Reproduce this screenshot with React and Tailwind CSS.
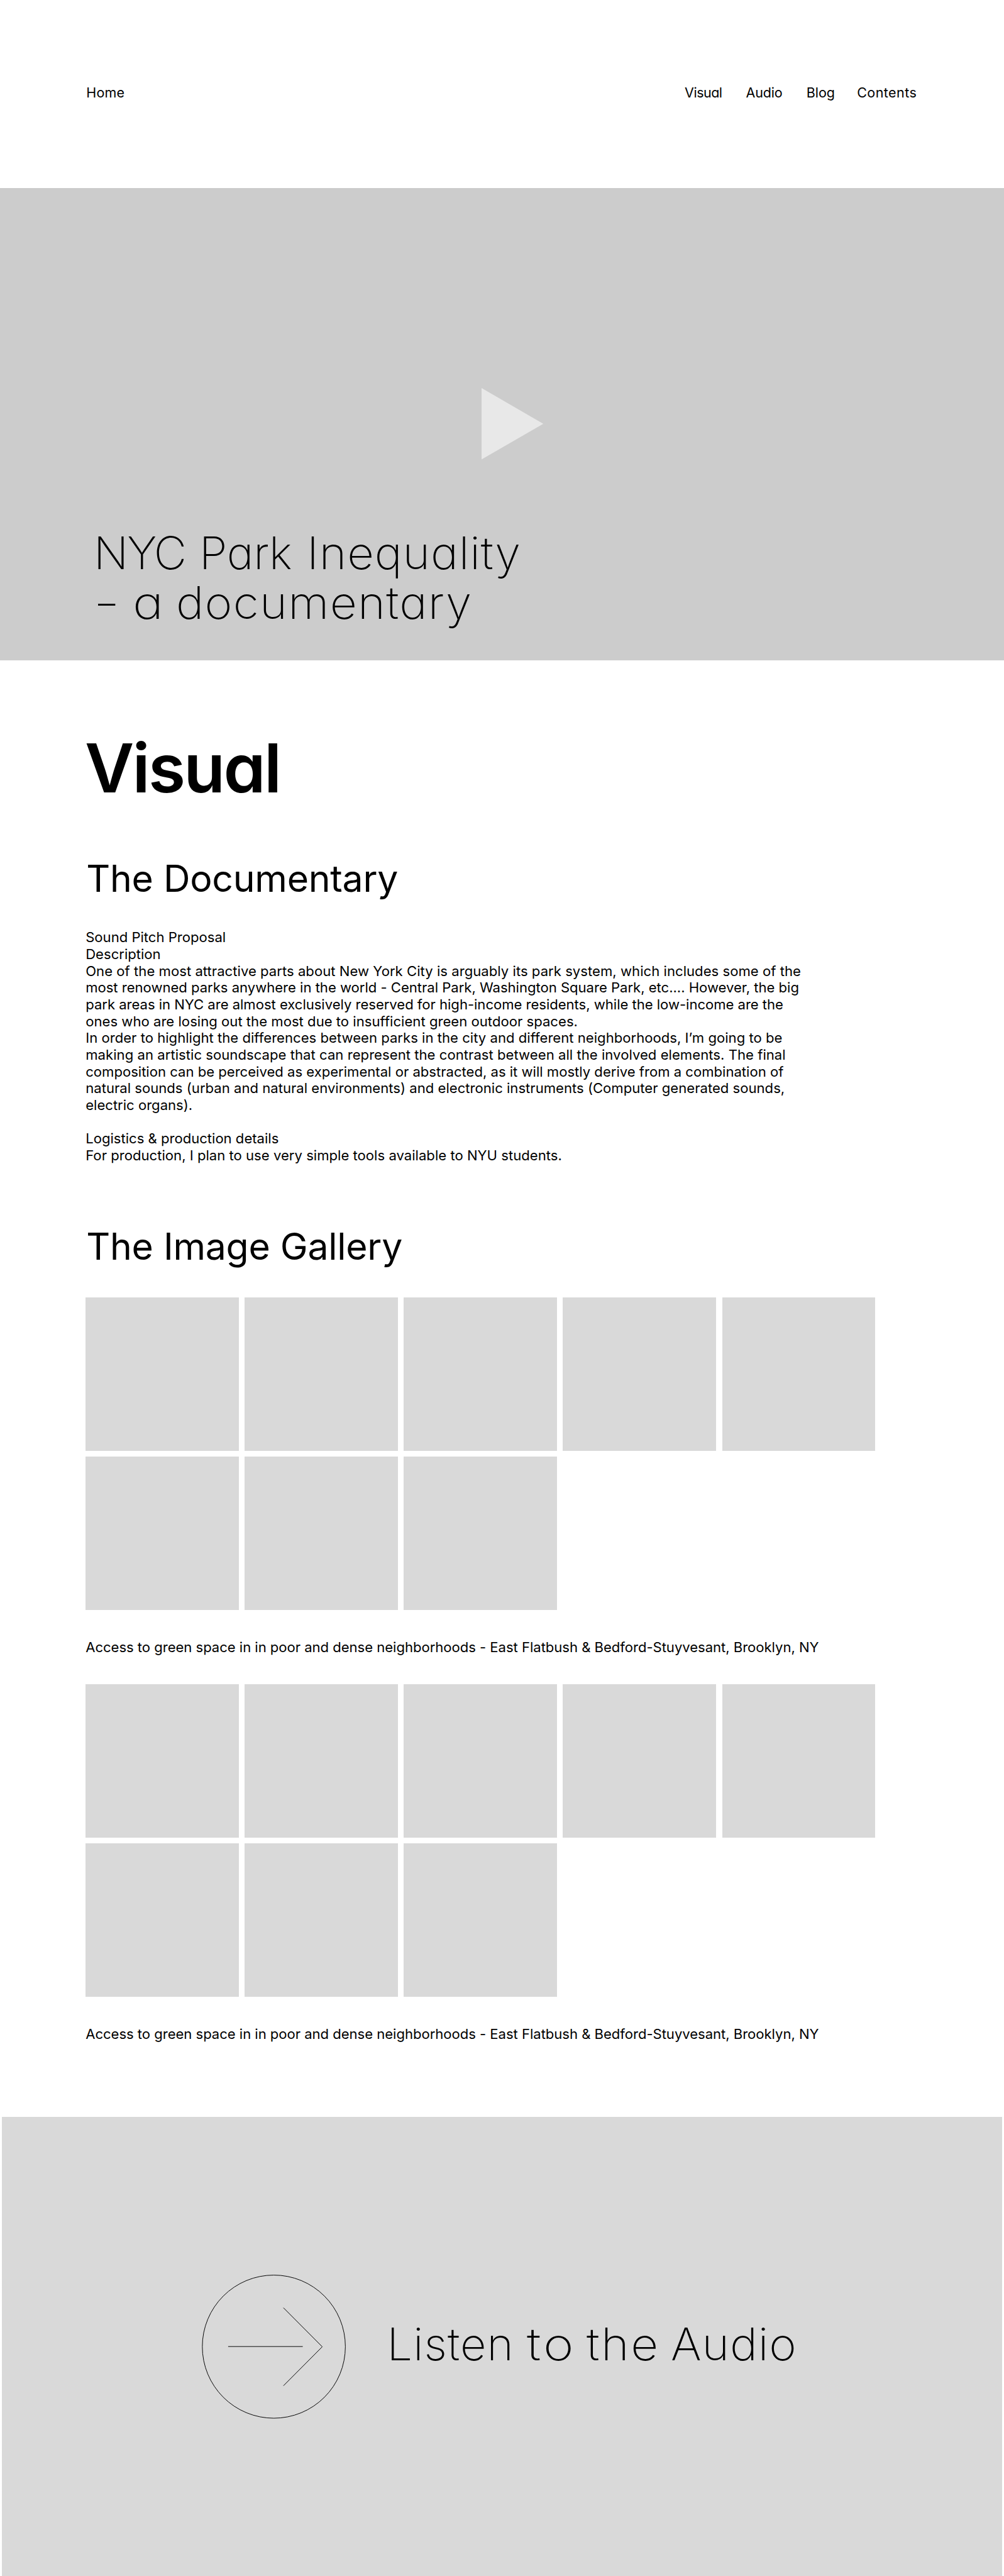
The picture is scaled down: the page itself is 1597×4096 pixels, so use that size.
const display = "font-['Inter',sans-serif] [font-feature-settings:'cv11']";

const body = [
  ["Sound Pitch Proposal", ""],
  ["Description", ""],
  ["One of the most attractive parts about New York City is arguably its park system, which includes some of the", "tracking-[0.036px]"],
  ["most renowned parks anywhere in the world - Central Park, Washington Square Park, etc.... However, the big", "tracking-[-0.017px]"],
  ["park areas in NYC are almost exclusively reserved for high-income residents, while the low-income are the", "tracking-[-0.025px]"],
  ["ones who are losing out the most due to insufficient green outdoor spaces.", "tracking-[0.023px]"],
  ["In order to highlight the differences between parks in the city and different neighborhoods, I’m going to be", "tracking-[0.018px]"],
  ["making an artistic soundscape that can represent the contrast between all the involved elements. The final", "tracking-[0.041px]"],
  ["composition can be perceived as experimental or abstracted, as it will mostly derive from a combination of", ""],
  ["natural sounds (urban and natural environments) and electronic instruments (Computer generated sounds,", "tracking-[0.014px]"],
  ["electric organs).", ""],
  ["", ""],
  ["Logistics & production details", ""],
  ["For production, I plan to use very simple tools available to NYU students.", "tracking-[0.02px]"],
];

function Gallery() {
  return (
    <div className="grid w-fit auto-rows-[243.9px] grid-cols-[repeat(5,243.9px)] gap-[9.2px]">
      {Array.from({ length: 8 }, (_, i) => (
        <div key={i} className="bg-[#d9d9d9]" />
      ))}
    </div>
  );
}

function Caption() {
  return (
    <p className="text-[22.09px] leading-[26.69px] tracking-[-0.029px] whitespace-nowrap">
      Access to green space in in poor and dense neighborhoods - East Flatbush &amp; Bedford-Stuyvesant, Brooklyn, NY
    </p>
  );
}

export default function App() {
  return (
    <div className="h-[4096px] w-[1597px] overflow-hidden bg-white font-['Inter',sans-serif] text-black">
      <header className={`flex h-[299.2px] pt-[134.3px] pl-[137.3px] text-[21.5px] leading-[27px] whitespace-nowrap ${display}`}>
        <a className="w-[951.8px] tracking-[0.2px]">Home</a>
        <nav className="flex">
          <a className="w-[97.5px] tracking-[-0.5px]">Visual</a>
          <a className="w-[96.1px] tracking-[-0.2px]">Audio</a>
          <a className="w-[80.5px]">Blog</a>
          <a className="tracking-[0.45px]">Contents</a>
        </nav>
      </header>

      <section className="h-[750.9px] bg-[#cccccc] pt-[318.1px]">
        <svg className="ml-[765.9px] block h-[113.6px] w-[98.2px]" viewBox="0 0 98.2 113.6">
          <path d="M0 0 98.2 56.8 0 113.6Z" fill="#e8e8e8" />
        </svg>
        <h1 className={`mt-[109.6px] ml-[149px] text-[72px] leading-[78.2px] font-extralight whitespace-nowrap ${display}`}>
          <span className="flex">
            <span className="w-[168px] tracking-[-2px]">NYC </span>
            <span className="w-[171.2px] tracking-[-0.2px]">Park </span>
            <span className="origin-left scale-x-[1.03] tracking-[0.87px]">Inequality</span>
          </span>
          <span className="flex pl-[7px]">
            <span className="w-[54.5px]">
              <span className="inline-block origin-left scale-x-[0.76]">–</span>{" "}
            </span>
            <span className="w-[69.5px]">
              <span className="inline-block origin-left scale-x-[1.15]">a</span>{" "}
            </span>
            <span className="origin-left scale-x-[1.04] tracking-[1.25px]">documentary</span>
          </span>
        </h1>
      </section>

      <main className="pt-[115.9px] pl-[136.2px]">
        <h2 className={`ml-[-1.3px] text-[107.6px] leading-[110px] font-semibold tracking-[-2.7px] ${display}`}>Visual</h2>
        <h3 className="mt-[84.7px] ml-[1px] text-[58.9px] leading-[71px] tracking-[-0.24px]">The Documentary</h3>
        <div className="mt-[45.5px] text-[22.09px] leading-[26.69px] whitespace-nowrap">
          {body.map(([line, tracking], i) => (
            <p key={i} className={`h-[26.69px] ${tracking}`}>{line}</p>
          ))}
        </div>
        <h3 className="mt-[95.5px] mb-[45.4px] ml-[1px] text-[58.9px] leading-[71px] tracking-[-0.26px]">The Image Gallery</h3>
        <Gallery />
        <div className="my-[46px]"><Caption /></div>
        <Gallery />
        <div className="mt-[46px]"><Caption /></div>
      </main>

      <footer className="mx-[3px] mt-[118px] flex h-[731px] bg-[#d9d9d9] pt-[251.3px] pl-[317.8px]">
        <svg className="block h-[229px] w-[229px] shrink-0" viewBox="348.5 3929.7 248.6 248.6" fill="none" stroke="black" strokeWidth="1.05">
          <circle cx="472.9" cy="4053.8" r="123.5" />
          <path d="M394 4053.6H522.8M489.5 3986.7 556.5 4054 489.5 4121.3" />
        </svg>
        <p className={`mt-[65.6px] ml-[65.8px] flex text-[72px] leading-[87px] font-extralight whitespace-nowrap ${display}`}>
          <span className="w-[222.7px] tracking-[1.1px]">Listen </span>
          <span className="w-[95px]">
            <span className="inline-block origin-left scale-x-[1.15] tracking-[3.7px]">to</span>{" "}
          </span>
          <span className="w-[134.2px]">
            <span className="inline-block origin-left scale-x-[1.06] tracking-[2.3px]">the</span>{" "}
          </span>
          <span className="origin-left scale-x-[1.03] tracking-[0.9px]">Audio</span>
        </p>
      </footer>
    </div>
  );
}
